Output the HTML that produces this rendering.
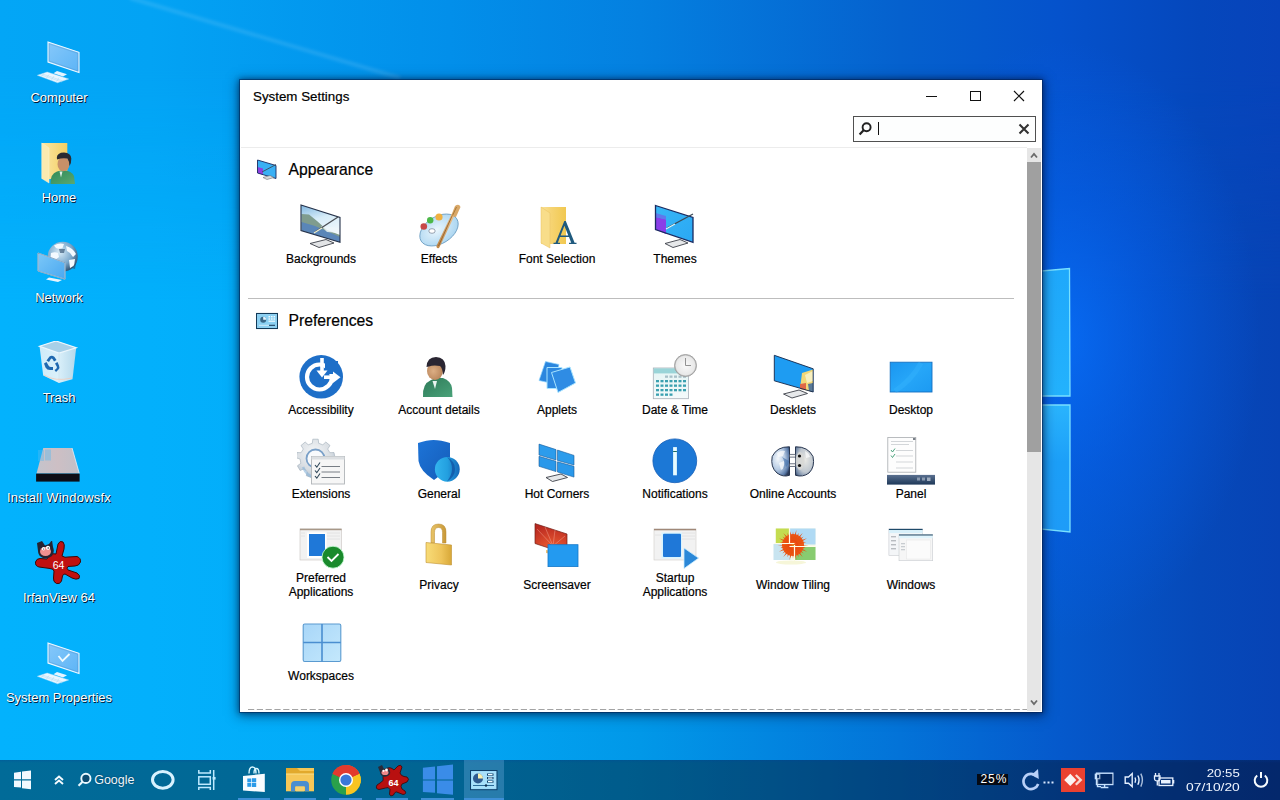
<!DOCTYPE html>
<html><head><meta charset="utf-8">
<style>
*{margin:0;padding:0;box-sizing:border-box}
html,body{width:1280px;height:800px;overflow:hidden}
body{position:relative;font-family:"Liberation Sans",sans-serif;background:#0480e0}
.full{position:absolute;left:0;top:0;width:1280px;height:800px}
#bgB{background:linear-gradient(90deg,#03b2fd 0px,#03b0fc 150px,#02aaf7 400px,#0198e8 640px,#0373d8 900px,#0559cc 1060px,#0649b9 1200px,#0743b5 1280px)}
#bgT{background:linear-gradient(90deg,#03a6f6 0px,#03a3f4 150px,#028fea 450px,#0480e0 640px,#0561ce 900px,#0552cc 1060px,#0547bc 1200px,#0743ba 1280px);
 -webkit-mask-image:linear-gradient(180deg,#000 0px,#000 70px,rgba(0,0,0,0) 300px)}
.dicon{position:absolute;left:0;width:118px;height:90px}
.dicon span{position:absolute;left:0;top:0;width:118px;text-align:center;color:#fff;font-size:13px;line-height:15px;white-space:nowrap;text-shadow:1px 1px 0.5px rgba(0,15,40,0.95),0 0 1.5px rgba(0,20,50,0.35)}
.dicon svg{position:absolute;left:35px;width:48px;height:48px}
#win{position:absolute;left:240px;top:80px;width:802px;height:632px;background:#fff;
 box-shadow:0 0 0 1px rgba(0,30,80,0.5),0 0 5px 1px rgba(0,20,60,0.45),0 2px 11px 2px rgba(0,15,50,0.5)}
.t{position:absolute;white-space:nowrap;color:#000;-webkit-text-stroke:0.2px #000}
.lbl{position:absolute;width:118px;text-align:center;font-size:12px;line-height:14px;color:#000;white-space:nowrap;-webkit-text-stroke:0.2px #000}
.ic{position:absolute;width:48px;height:48px}
#taskbar{position:absolute;left:0;top:760px;width:1280px;height:40px;background:rgba(0,0,0,0.4)}
.tb{position:absolute}
</style></head><body>
<div id="bgB" class="full"></div>
<div id="bgT" class="full"></div>
<svg class="full" width="1280" height="800">
 <defs>
  <radialGradient id="glow" cx="1060" cy="340" r="200" gradientTransform="translate(1060 340) scale(1 1.5) translate(-1060 -340)" gradientUnits="userSpaceOnUse">
   <stop offset="0" stop-color="#0870ff" stop-opacity="0.75"/>
   <stop offset="0.5" stop-color="#0660f0" stop-opacity="0.45"/>
   <stop offset="1" stop-color="#0660f0" stop-opacity="0"/>
  </radialGradient>
  <filter id="blur1"><feGaussianBlur stdDeviation="1.5"/></filter>
  <linearGradient id="pane1" x1="0" y1="0" x2="0" y2="1"><stop offset="0" stop-color="#1fa8fb"/><stop offset="1" stop-color="#23b2fd"/></linearGradient>
  <linearGradient id="pane2" x1="0" y1="0" x2="0" y2="1"><stop offset="0" stop-color="#2ab4fd"/><stop offset="0.45" stop-color="#1c9ff8"/><stop offset="1" stop-color="#1e9cf8"/></linearGradient>
 </defs>
 <rect x="800" y="0" width="480" height="760" fill="url(#glow)"/>
 <line x1="130" y1="-2" x2="400" y2="78" stroke="rgba(255,255,255,0.11)" stroke-width="4" filter="url(#blur1)"/>
 <polygon points="1030,272 1069.5,268.5 1070,396 1030,396" fill="url(#pane1)" stroke="#78e0ff" stroke-width="1.3"/>
 <polygon points="1030,405 1070,405 1070,532 1030,528" fill="url(#pane2)" stroke="#78e0ff" stroke-width="1.3"/>
</svg>
<svg class="dicon-svg" style="position:absolute;left:35px;top:38px" width="48" height="48" viewBox="0 0 48 48">
<defs><linearGradient id="cmp1" x1="0" y1="0" x2="1" y2="1"><stop offset="0" stop-color="#86c8fa"/><stop offset="1" stop-color="#5cb4f6"/></linearGradient></defs>
<polygon points="2.3,37.3 12.2,34 33.7,41 22.5,44.8" fill="#eaf6ff" stroke="#b8e0fa" stroke-width="0.4"/>
<g stroke="#a8d4f0" stroke-width="0.45"><path d="M7 35.8 L28 43"/><path d="M5 36.5 L27 44"/><path d="M9 35 L6.5 38.5"/><path d="M14 36.5 L11.5 40"/><path d="M19 38 L16.5 41.8"/><path d="M24 39.6 L21.5 43.5"/></g>
<polygon points="22,33 32,36.2 28,38.5 18.5,35.3" fill="#e4f4ff"/>
<polygon points="13,4 44,14.3 44,34.5 13,24" fill="url(#cmp1)"/>
<polygon points="13,4 44,14.3 44,34.5 13,24" fill="none" stroke="#eef8ff" stroke-width="1.1"/>
<polygon points="14.2,5.8 42.8,15.3 42.8,32.8 14.2,23" fill="none" stroke="#3a78b0" stroke-width="0.4" opacity="0.6"/>
</svg>
<div class="dicon" style="top:90.3px"><span style="left:0">Computer</span></div>
<svg class="dicon-svg" style="position:absolute;left:35px;top:141px" width="48" height="48" viewBox="0 0 48 48">
<defs><linearGradient id="hm1" x1="0" y1="0" x2="1" y2="0"><stop offset="0" stop-color="#fbe6a4"/><stop offset="1" stop-color="#f3cf62"/></linearGradient>
<linearGradient id="hm2" x1="0" y1="0" x2="1" y2="1"><stop offset="0" stop-color="#2e8a58"/><stop offset="1" stop-color="#5aa870"/></linearGradient></defs>
<rect x="6.8" y="2" width="25.5" height="36" fill="url(#hm1)"/>
<polygon points="6.8,2 14,7 14,42 6.8,37.5" fill="#fbeab0" stroke="#f8f0d0" stroke-width="0.5"/>
<path d="M15.5 43 Q15 33 22 30.5 L28 29 Q37 30 39 35 L40 43 Z" fill="url(#hm2)"/>
<path d="M24.5 30.5 L26 36.5 L27.5 30.5 Z" fill="#e0f0e8"/>
<ellipse cx="28.5" cy="23" rx="6" ry="7.3" fill="#c89068"/>
<path d="M21.8 17 Q22 11.5 29 11.5 Q36 12 36.3 17.5 Q36.5 22 34.5 25 Q34.2 20 32.5 17.5 Q27 16.5 22.3 18.5 Z" fill="#2a2a30"/>
</svg>
<div class="dicon" style="top:190.3px"><span style="left:0">Home</span></div>
<svg class="dicon-svg" style="position:absolute;left:35px;top:241px" width="48" height="48" viewBox="0 0 48 48">
<defs><radialGradient id="net1" cx="0.4" cy="0.35" r="0.7"><stop offset="0" stop-color="#d8ecf8"/><stop offset="0.6" stop-color="#7aa8cc"/><stop offset="1" stop-color="#2a4a6a"/></radialGradient>
<linearGradient id="net2" x1="0" y1="0" x2="1" y2="1"><stop offset="0" stop-color="#7cc8f8"/><stop offset="1" stop-color="#4aa8f0"/></linearGradient></defs>
<circle cx="27.7" cy="15.7" r="15" fill="url(#net1)"/>
<g fill="#f4faff"><path d="M19 4.5 Q24 1.5 29 3 L27.5 7 Q23 8.5 21 7 Z"/><path d="M31 5 Q38 7 41 13 L38 16 L35 12 L32 10 Z"/><path d="M16 12 Q20 10.5 23 12 L24 16 L20 19 L15.5 17 Z"/><path d="M34 19 L40 18 L39 25 L35 27 Z"/></g>
<g fill="#2a4868" opacity="0.6"><path d="M24 8 L30 8 L29 12 L25 12 Z"/><path d="M36 27 L41 22 L40 28 Z"/></g>
<path d="M14 36.5 L27 39 L23 41 L11 38.5 Z" fill="#e8f4fc"/>
<polygon points="3,12 30,21.7 30,38.2 3,30" fill="url(#net2)" stroke="#eaf6ff" stroke-width="1"/>
<polygon points="3,12 30,21.7 30,38.2 3,30" fill="none" stroke="#2a5a88" stroke-width="0.5"/>
</svg>
<div class="dicon" style="top:290.3px"><span style="left:0">Network</span></div>
<svg class="dicon-svg" style="position:absolute;left:35px;top:341px" width="48" height="48" viewBox="0 0 48 48">
<defs><linearGradient id="tr1" x1="0" y1="0" x2="1" y2="0"><stop offset="0" stop-color="#e0f0f8"/><stop offset="0.5" stop-color="#eef6fa"/><stop offset="1" stop-color="#c4dcea"/></linearGradient></defs>
<polygon points="4.5,5.2 21,0 41.2,6.7 37.5,38.2 24,42 8.2,34.5" fill="url(#tr1)" opacity="0.92"/>
<polygon points="4.5,5.2 21,0 41.2,6.7 24,12" fill="#a8d0e8" stroke="#ecf6fc" stroke-width="1.2"/>
<path d="M24 12 L24 42" stroke="#d0e4f0" stroke-width="0.8"/>
<g fill="#1f68b0">
<path d="M14.5 15.5 Q17 14 19.5 16 L21.5 19 L19 20.5 L17.5 18 Q16.5 17 15.5 18.5 L14 21 L11.5 19.5 Z"/>
<path d="M9 22.5 L11.5 21 L13.5 24.5 Q14.5 26 16 26 L18 26 L18 29 L15 29 Q12 29 10.5 26.5 Z"/>
<path d="M22.5 21 L20 22.5 L21.8 25.8 Q22.3 27 21 28 L19.5 29 L21 31 L23.5 28.5 Q25 26.5 24 24.5 Z"/>
</g>
<path d="M9 34 Q20 41 37 37" stroke="#f8c8b0" stroke-width="1" fill="none" opacity="0.7"/>
</svg>
<div class="dicon" style="top:390.3px"><span style="left:0">Trash</span></div>
<svg class="dicon-svg" style="position:absolute;left:35px;top:441px" width="48" height="48" viewBox="0 0 48 48">
<defs><linearGradient id="iw1" x1="0" y1="0" x2="1" y2="0"><stop offset="0" stop-color="#c4c4cc"/><stop offset="0.5" stop-color="#cdbfc4"/><stop offset="1" stop-color="#c0c0c8"/></linearGradient></defs>
<polygon points="8.25,7.1 37.1,7.1 44.25,32.4 1.5,32.4" fill="url(#iw1)"/>
<path d="M37.1 7.1 L44.25 32.4" stroke="#e8f0f8" stroke-width="0.8"/>
<rect x="1.1" y="32.6" width="43.5" height="8" fill="#0e0e16"/>
<path d="M3 9 L9 9 L9 20 L3 20 Z M10 8.5 L16 8.5 L16 19.5 L10 19.5 Z" fill="#58b8f0" opacity="0.4"/>
</svg>
<div class="dicon" style="top:490.3px"><span style="left:0;letter-spacing:0.22px">Install Windowsfx</span></div>
<svg class="dicon-svg" style="position:absolute;left:35px;top:541px" width="48" height="48" viewBox="0 0 48 48">
<path d="M14 14 Q18 12 21 13 L23 3 Q25 -1 28 1 Q30 3 29 8 L27 15 Q30 17 33 16 L42 15.5 Q46 17 45.5 21 Q44 25 40 25 L33 25.5 Q31 27 33 29 L42 32 Q46 34.5 44 37.5 Q41 39 37 37 L30 33 Q28 33 27.5 35 L26.5 40 Q25 43.5 21.5 42.5 Q18 41 18.5 37 L19 30 Q18 27.5 15 27.5 L4 26 Q0 25 0.5 21 Q1.5 17.5 5 17.5 L12 18 Z" fill="#c01010" stroke="#3a0808" stroke-width="1"/>
<path d="M2 2 L7 0 L10 4.5 L14 3 L17 -1 L18 6 Q20 11 17 15 Q13 18 8 17 Q3 15 3 10 Z" fill="#262230"/>
<ellipse cx="10.5" cy="10.5" rx="5.5" ry="4.5" fill="#f09090"/>
<circle cx="13" cy="6.8" r="2.1" fill="#ffffff"/><circle cx="8.5" cy="7.8" r="1.7" fill="#ffffff"/>
<circle cx="13.2" cy="7" r="0.7" fill="#222"/><circle cx="8.7" cy="8" r="0.6" fill="#222"/>
<text x="23.5" y="27.8" font-family="Liberation Sans" font-size="10.5" fill="#ffffff" text-anchor="middle">64</text>
</svg>
<div class="dicon" style="top:590.3px"><span style="left:0">IrfanView 64</span></div>
<svg class="dicon-svg" style="position:absolute;left:35px;top:639px" width="48" height="48" viewBox="0 0 48 48">
<defs><linearGradient id="cmp1" x1="0" y1="0" x2="1" y2="1"><stop offset="0" stop-color="#86c8fa"/><stop offset="1" stop-color="#5cb4f6"/></linearGradient></defs>
<polygon points="2.3,37.3 12.2,34 33.7,41 22.5,44.8" fill="#eaf6ff" stroke="#b8e0fa" stroke-width="0.4"/>
<g stroke="#a8d4f0" stroke-width="0.45"><path d="M7 35.8 L28 43"/><path d="M5 36.5 L27 44"/><path d="M9 35 L6.5 38.5"/><path d="M14 36.5 L11.5 40"/><path d="M19 38 L16.5 41.8"/><path d="M24 39.6 L21.5 43.5"/></g>
<polygon points="22,33 32,36.2 28,38.5 18.5,35.3" fill="#e4f4ff"/>
<polygon points="13,4 44,14.3 44,34.5 13,24" fill="url(#cmp1)"/>
<polygon points="13,4 44,14.3 44,34.5 13,24" fill="none" stroke="#eef8ff" stroke-width="1.1"/>
<polygon points="14.2,5.8 42.8,15.3 42.8,32.8 14.2,23" fill="none" stroke="#3a78b0" stroke-width="0.4" opacity="0.6"/>
<path d="M23.5 17 L27.5 22 L34.5 15" stroke="#f0fbff" stroke-width="1.8" fill="none"/></svg>
<div class="dicon" style="top:690.3px"><span style="left:0">System Properties</span></div>
<div id="win">
<div class="t" style="left:13px;top:8.5px;font-size:13.33px;line-height:16px">System Settings</div>
<div style="position:absolute;left:686px;top:15.5px;width:11px;height:1.3px;background:#111"></div>
<div style="position:absolute;left:730px;top:11px;width:11px;height:10px;border:1.3px solid #111"></div>
<svg style="position:absolute;left:773px;top:10px" width="12" height="12" viewBox="0 0 12 12"><path d="M1 1L11 11M11 1L1 11" stroke="#111" stroke-width="1.2"/></svg>
<div style="position:absolute;left:613px;top:36px;width:183px;height:26px;border:1px solid #505050;background:#fdfefe"></div>
<svg style="position:absolute;left:617px;top:40px" width="18" height="18" viewBox="0 0 18 18"><circle cx="9.6" cy="7.2" r="4" fill="none" stroke="#222" stroke-width="1.9"/><path d="M6.8 10L2.6 14.4" stroke="#222" stroke-width="2.2"/></svg>
<div style="position:absolute;left:638px;top:41.5px;width:1.2px;height:13.5px;background:#111"></div>
<svg style="position:absolute;left:778px;top:43px" width="12" height="12" viewBox="0 0 12 12"><path d="M1.5 1.5L10.5 10.5M10.5 1.5L1.5 10.5" stroke="#333" stroke-width="2.1"/></svg>
<div style="position:absolute;left:1px;top:66.5px;width:786px;height:1px;background:#ececec"></div>
<div style="position:absolute;left:787px;top:68px;width:14px;height:563px;background:#e6e6e6"></div>
<div style="position:absolute;left:787px;top:82px;width:14px;height:289.5px;background:#a0a0a0"></div>
<svg style="position:absolute;left:789px;top:71px" width="10" height="8" viewBox="0 0 10 8"><path d="M2 6.5L5 3L8 6.5" fill="none" stroke="#6a6a6a" stroke-width="1.8"/></svg>
<svg style="position:absolute;left:789px;top:619px" width="10" height="8" viewBox="0 0 10 8"><path d="M2 1.5L5 5L8 1.5" fill="none" stroke="#6a6a6a" stroke-width="1.8"/></svg>
<svg style="position:absolute;left:0;top:626px" width="787" height="6"><line x1="8" y1="3.5" x2="787" y2="3.5" stroke="#a4a4a4" stroke-width="1.2" stroke-dasharray="6.2 2.6"/></svg>
<svg style="position:absolute;left:16px;top:79px" width="22" height="22" viewBox="0 0 22 22">
<polygon points="1.5,1 20,6.5 20,19.5 1.5,14" fill="#3ab0f4"/>
<polygon points="1.5,8 7,9.5 7,15.8 1.5,14" fill="#9040e0"/>
<polygon points="1.5,1 20,6.5 20,19.5 1.5,14" fill="none" stroke="#1a2a60" stroke-width="0.9"/>
<path d="M6 13 L20 5.5" stroke="#3a4a58" stroke-width="0.9"/>
<path d="M7 18.5 L14 16.5 L18 18.5 L11 20.5 Z" fill="#d8dadc" stroke="#5a5a60" stroke-width="0.5"/>
</svg>
<div class="t" style="left:48.5px;top:81.2px;font-size:15.7px;line-height:18px">Appearance</div>
<div style="position:absolute;left:8px;top:218px;width:766px;height:1px;background:#bdbdbd"></div>
<svg style="position:absolute;left:16px;top:230px" width="22" height="22" viewBox="0 0 22 22">
<rect x="0.5" y="3.5" width="21" height="15" fill="#9ad8f6" stroke="#123a58" stroke-width="1.1"/>
<rect x="1.5" y="4.5" width="19" height="13" fill="#8ad0f2"/>
<circle cx="7.2" cy="9.8" r="3" fill="#3a6888"/>
<path d="M7.2 9.8 L7.2 6.8 A3 3 0 0 1 10.2 9.8 Z" fill="#e4f4fc"/>
<g fill="#eefaff"><rect x="12.5" y="6" width="1.6" height="1.4"/><rect x="15" y="6" width="1.6" height="1.4"/><rect x="17.5" y="6" width="1.6" height="1.4"/><rect x="12.5" y="8.3" width="1.6" height="1.4"/><rect x="15" y="8.3" width="1.6" height="1.4"/><rect x="17.5" y="8.3" width="1.6" height="1.4"/><rect x="12.5" y="10.6" width="6.6" height="1.2"/></g>
<rect x="3" y="14.8" width="10" height="1" fill="#d0ecf8"/><rect x="13" y="14.8" width="6" height="1" fill="#1a3a58"/>
</svg>
<div class="t" style="left:48.5px;top:232.2px;font-size:15.7px;line-height:18px">Preferences</div>
<svg class="ic" style="left:57px;top:122px" viewBox="0 0 48 48">
<defs><linearGradient id="bgk1" x1="0" y1="0" x2="0.3" y2="1"><stop offset="0" stop-color="#7fb6e0"/><stop offset="0.45" stop-color="#d6ecf8"/><stop offset="1" stop-color="#f4fafd"/></linearGradient></defs>
<path d="M13 41.5 L29 37.5 L37 41 L22 45.5 Z" fill="#e2e4e6" stroke="#3c4048" stroke-width="0.9"/>
<polygon points="4,3 43,15.5 43,40.3 4,28.6" fill="url(#bgk1)"/>
<polygon points="4.5,12 12,12.5 20,19 30,28 43,33 43,40 4.5,28.6" fill="#7f9c8e"/>
<polygon points="4.5,20 18,24 34,31 43,35 43,40.2 4.5,28.6" fill="#5a86b8"/>
<polygon points="24,24 43,26 43,31 30,30" fill="#eef6fa" opacity="0.8"/>
<polygon points="4,3 43,15.5 43,40.3 4,28.6" fill="none" stroke="#25324a" stroke-width="1.1"/>
<path d="M18 30 L41 15" stroke="#4a4f55" stroke-width="1.3"/>
<path d="M17 31 L25 26" stroke="#f0f0d0" stroke-width="1.3"/>
</svg>
<div class="lbl" style="left:22px;top:172.3px">Backgrounds</div>
<svg class="ic" style="left:175px;top:122px" viewBox="0 0 48 48">
<defs><radialGradient id="pal1" cx="0.45" cy="0.45" r="0.6"><stop offset="0" stop-color="#eaf6fd"/><stop offset="1" stop-color="#a8d4f0"/></radialGradient>
<linearGradient id="brs1" x1="0" y1="0" x2="1" y2="0"><stop offset="0" stop-color="#c08848"/><stop offset="1" stop-color="#e8c08c"/></linearGradient></defs>
<ellipse cx="24" cy="28" rx="21" ry="13.5" transform="rotate(-32 24 28)" fill="url(#pal1)" stroke="#6a9cc0" stroke-width="0.8"/>
<ellipse cx="17" cy="29" rx="3.2" ry="2.3" fill="#ffffff" stroke="#5a6a80" stroke-width="0.6"/>
<circle cx="8.8" cy="24.5" r="3.3" fill="#c84848"/>
<circle cx="15.2" cy="18.3" r="3.2" fill="#4cb848"/>
<circle cx="24" cy="15" r="3.6" fill="#f0b040"/>
<path d="M23 44.5 L38 13" stroke="url(#brs1)" stroke-width="3.2" stroke-linecap="round"/>
<path d="M23.5 44 L37 14" stroke="#8a5a28" stroke-width="0.8"/>
<path d="M36 14 L40 4 Q44 1 45.5 5 L41 15 Z" fill="#d9a868"/>
<path d="M37.5 13.5 L41.5 5" stroke="#a87838" stroke-width="1"/>
</svg>
<div class="lbl" style="left:140px;top:172.3px">Effects</div>
<svg class="ic" style="left:293px;top:122px" viewBox="0 0 48 48">
<defs><linearGradient id="fold1" x1="0" y1="0" x2="1" y2="0"><stop offset="0" stop-color="#f9e29a"/><stop offset="0.4" stop-color="#f6d473"/><stop offset="1" stop-color="#f1c850"/></linearGradient></defs>
<rect x="8" y="5" width="25" height="37" fill="url(#fold1)"/>
<polygon points="8,5 17,11 17,46 8,41" fill="#f8dd8a"/>
<polygon points="17,11 17,46 8,41 8,5" fill="none" stroke="#e8c060" stroke-width="0.5"/>
<path d="M31.3 19 L22.5 40.8 L20.5 40.8 L20.5 42 L27 42 L27 40.8 L24.8 40.8 L27 35 L36 35 L38.2 40.8 L36 40.8 L36 42 L43.5 42 L43.5 40.8 L41.6 40.8 L32.8 19 Z M27.6 33.5 L31.4 23.8 L35.3 33.5 Z" fill="#1f5a7e"/>
</svg>
<div class="lbl" style="left:258px;top:172.3px">Font Selection</div>
<svg class="ic" style="left:411px;top:122px" viewBox="0 0 48 48">
<defs><linearGradient id="thm1" x1="0" y1="0" x2="1" y2="1"><stop offset="0" stop-color="#38b6f6"/><stop offset="1" stop-color="#2aa8f4"/></linearGradient></defs>
<path d="M14 41.5 L29 37.5 L37 41 L22 45.5 Z" fill="#e6e8ea" stroke="#3c4048" stroke-width="0.9"/>
<polygon points="4.5,3.5 42,15.5 42,40.3 4.5,27.5" fill="url(#thm1)"/>
<polygon points="4.5,15 15,17.5 15,32 4.5,27.5" fill="#8a3ee8"/>
<polygon points="4.5,11 15,14 15,17.5 4.5,15" fill="#6a6ae8" opacity="0.8"/>
<polygon points="4.5,3.5 42,15.5 42,40.3 4.5,27.5" fill="none" stroke="#1a2a60" stroke-width="1.3"/>
<path d="M16 26 L42 12" stroke="#3a4a58" stroke-width="1.4"/>
<path d="M15 27 L24 22" stroke="#d8f8ff" stroke-width="1.3"/>
</svg>
<div class="lbl" style="left:376px;top:172.3px">Themes</div>
<svg class="ic" style="left:57px;top:273px" viewBox="0 0 48 48">
<circle cx="24.2" cy="23.8" r="21.8" fill="#1e6fc8"/>
<circle cx="22.5" cy="24" r="12.5" fill="none" stroke="#ffffff" stroke-width="4.2"/>
<circle cx="22.5" cy="24" r="8.5" fill="#1e6fc8"/>
<path d="M28 8 L41 8 L41 21 L28 21 Z" fill="#1e6fc8"/>
<path d="M25 5 L25 19" stroke="#fff" stroke-width="3.6"/>
<path d="M19.5 17.5 L25 24.5 L30.5 17.5 Z" fill="#fff"/>
<path d="M27 24.2 L38 24.2" stroke="#fff" stroke-width="3.6"/>
<path d="M36 18.5 L43.5 24.2 L36 30 Z" fill="#fff"/>
</svg>
<div class="lbl" style="left:22px;top:323.3px">Accessibility</div>
<svg class="ic" style="left:175px;top:273px" viewBox="0 0 48 48">
<defs><linearGradient id="acc1" x1="0" y1="0" x2="1" y2="1"><stop offset="0" stop-color="#2e7a58"/><stop offset="1" stop-color="#4aa27a"/></linearGradient>
<radialGradient id="acc2" cx="0.4" cy="0.5" r="0.6"><stop offset="0" stop-color="#dcae84"/><stop offset="1" stop-color="#b8845a"/></radialGradient></defs>
<path d="M8 44 Q7 31 16 27 L21 25 L28 25 Q36 28 37 35 L37.5 44 Z" fill="url(#acc1)"/>
<path d="M17.5 28 L20 36 L22 28 Z" fill="#e8f4f0"/>
<ellipse cx="20" cy="18" rx="8" ry="9" fill="url(#acc2)"/>
<path d="M11.5 14 Q12 4 21 4 Q30 4.5 30.5 13 Q30.5 19 28 22 Q27.5 15 25 13 Q18 12 14 13.5 Z" fill="#2a2632"/>
</svg>
<div class="lbl" style="left:140px;top:323.3px">Account details</div>
<svg class="ic" style="left:293px;top:273px" viewBox="0 0 48 48">
<polygon points="12.5,8.5 26,11.5 22,31 6,27.5" fill="#2b86de" stroke="#8fd6ff" stroke-width="0.7"/>
<polygon points="14,14.5 29,14.5 29,35.5 14,35.5" fill="#2d88e0" stroke="#a8e4ff" stroke-width="1"/>
<polygon points="18.5,19.5 37,14 42.5,30 25,39.5" fill="#2f8ce4" stroke="#a8e4ff" stroke-width="1"/>
</svg>
<div class="lbl" style="left:258px;top:323.3px">Applets</div>
<svg class="ic" style="left:411px;top:273px" viewBox="0 0 48 48">
<defs><linearGradient id="cal1" x1="0" y1="0" x2="0" y2="1"><stop offset="0" stop-color="#e4f4f4"/><stop offset="1" stop-color="#f4fafb"/></linearGradient>
<radialGradient id="clk1" cx="0.5" cy="0.5" r="0.5"><stop offset="0" stop-color="#fafafa"/><stop offset="0.85" stop-color="#e8e8e8"/><stop offset="1" stop-color="#a8a8a8"/></radialGradient></defs>
<rect x="2.3" y="15" width="35.2" height="30.7" fill="url(#cal1)" stroke="#a8b0b8" stroke-width="0.8"/>
<rect x="2.7" y="15.4" width="34.4" height="5" fill="#9ad4d8"/>
<g fill="#3aa0b0">
<rect x="5" y="27" width="3" height="2.3"/><rect x="9.5" y="27" width="3" height="2.3"/><rect x="14" y="27" width="3" height="2.3"/><rect x="18.5" y="27" width="3" height="2.3"/><rect x="23" y="27" width="3" height="2.3"/><rect x="27.5" y="27" width="3" height="2.3"/><rect x="32" y="27" width="3" height="2.3"/>
<rect x="5" y="31.5" width="3" height="2.3"/><rect x="9.5" y="31.5" width="3" height="2.3"/><rect x="14" y="31.5" width="3" height="2.3"/><rect x="18.5" y="31.5" width="3" height="2.3"/><rect x="23" y="31.5" width="3" height="2.3"/><rect x="27.5" y="31.5" width="3" height="2.3"/><rect x="32" y="31.5" width="3" height="2.3"/>
<rect x="5" y="36" width="3" height="2.3"/><rect x="9.5" y="36" width="3" height="2.3"/><rect x="14" y="36" width="3" height="2.3"/><rect x="18.5" y="36" width="3" height="2.3"/><rect x="23" y="36" width="3" height="2.3"/><rect x="27.5" y="36" width="3" height="2.3"/><rect x="32" y="36" width="3" height="2.3"/>
<rect x="5" y="40.5" width="3" height="2.3"/><rect x="9.5" y="40.5" width="3" height="2.3"/><rect x="14" y="40.5" width="3" height="2.3"/><rect x="18.5" y="40.5" width="3" height="2.3"/>
</g>
<g fill="#a8c0c8"><rect x="14" y="22.5" width="3" height="2.3"/><rect x="18.5" y="22.5" width="3" height="2.3"/><rect x="23" y="22.5" width="3" height="2.3"/><rect x="27.5" y="22.5" width="3" height="2.3"/><rect x="32" y="22.5" width="3" height="2.3"/></g>
<circle cx="34.5" cy="12.5" r="11" fill="url(#clk1)" stroke="#9a9a9a" stroke-width="0.8"/>
<path d="M34.5 5 L34.5 12.5 L40 12.5" stroke="#888" stroke-width="0.9" fill="none"/>
</svg>
<div class="lbl" style="left:376px;top:323.3px">Date &amp; Time</div>
<svg class="ic" style="left:529px;top:273px" viewBox="0 0 48 48">
<path d="M14.5 41 L30 37 L38.5 40.5 L23 45 Z" fill="#e6e8ea" stroke="#3c4048" stroke-width="0.9"/>
<polygon points="5.3,2.3 44.2,15.8 44.2,39 5.3,27.8" fill="#1e9cf2"/>
<polygon points="33,20 44,16.5 44,39 31,36" fill="#f3d878"/>
<polygon points="36,22 44,18 44,28 38,30" fill="#f8f0c0"/>
<polygon points="31,31 37,30 37,37 31,36" fill="#e06848"/>
<polygon points="39,31 44,30 44,39 40,38" fill="#5a7a98"/>
<polygon points="5.3,2.3 44.2,15.8 44.2,39 5.3,27.8" fill="none" stroke="#13264a" stroke-width="0.9"/>
</svg>
<div class="lbl" style="left:494px;top:323.3px">Desklets</div>
<svg class="ic" style="left:647px;top:273px" viewBox="0 0 48 48">
<defs><linearGradient id="dsk1" x1="0" y1="0" x2="1" y2="1"><stop offset="0" stop-color="#1a96f0"/><stop offset="0.5" stop-color="#26a6f8"/><stop offset="1" stop-color="#1c9af2"/></linearGradient></defs>
<rect x="3.2" y="9.2" width="41.8" height="29.8" fill="url(#dsk1)" stroke="#1670c0" stroke-width="0.9"/>
<path d="M8 38 Q24 28 34 10" stroke="#3ab8ff" stroke-width="5" opacity="0.35" fill="none"/>
</svg>
<div class="lbl" style="left:612px;top:323.3px">Desktop</div>
<svg class="ic" style="left:57px;top:357px" viewBox="0 0 48 48">
<defs><radialGradient id="gear1" cx="0.45" cy="0.35" r="0.75"><stop offset="0" stop-color="#f4f6f8"/><stop offset="0.6" stop-color="#d8dde2"/><stop offset="1" stop-color="#a4b8cc"/></radialGradient></defs>
<polygon points="15.8,2.2 21.2,2.2 21.7,6.3 25.8,7.8 28.8,5.0 33.0,8.5 30.7,12.0 32.9,15.7 37.0,15.5 38.0,20.8 34.0,22.0 33.2,26.3 36.6,28.8 33.9,33.5 30.0,31.9 26.7,34.6 27.7,38.7 22.6,40.6 20.7,36.8 16.3,36.8 14.4,40.6 9.3,38.7 10.3,34.6 7.0,31.9 3.1,33.5 0.4,28.8 3.8,26.3 3.0,22.0 -1.0,20.8 -0.0,15.5 4.1,15.7 6.3,12.0 4.0,8.5 8.2,5.0 11.2,7.8 15.3,6.3" fill="url(#gear1)" stroke="#a0acb8" stroke-width="0.6"/>
<circle cx="18.5" cy="21.5" r="9" fill="#f8fafc" stroke="#7aa0c8" stroke-width="1.8"/>
<path d="M6 30 Q10 40 18 40" stroke="#8ab4d8" stroke-width="2.5" fill="none" opacity="0.6"/>
<rect x="14.5" y="19.5" width="33" height="27.5" fill="#f6f6f6" stroke="#b0b4b8" stroke-width="0.9"/>
<rect x="14.5" y="19.5" width="33" height="3" fill="#dcdfe2"/>
<g stroke="#2e4658" stroke-width="1.1" fill="none"><path d="M18 28 L19.8 30.2 L23 25.5"/><path d="M18 33.5 L19.8 35.7 L23 31"/><path d="M18 39 L19.8 41.2 L23 36.5"/></g>
<g stroke="#6a7078" stroke-width="0.9"><path d="M24.5 29.5 L43 29.5"/><path d="M24.5 35 L43 35"/><path d="M24.5 40.5 L43 40.5"/></g>
</svg>
<div class="lbl" style="left:22px;top:407.3px">Extensions</div>
<svg class="ic" style="left:175px;top:357px" viewBox="0 0 48 48">
<defs><linearGradient id="gen1" x1="0" y1="0" x2="1" y2="1"><stop offset="0" stop-color="#1d74d8"/><stop offset="1" stop-color="#155cb8"/></linearGradient>
<linearGradient id="gen2" x1="0" y1="0" x2="1" y2="0"><stop offset="0" stop-color="#33b4ee"/><stop offset="0.5" stop-color="#23a0e0"/><stop offset="1" stop-color="#1466b8"/></linearGradient></defs>
<path d="M3 6 Q12 3 18.5 3 Q26 3 35 6 L35 24 Q34 33 19 43 Q5 34 3.5 24 Z" fill="url(#gen1)"/>
<circle cx="32.3" cy="32.3" r="12.4" fill="url(#gen2)"/>
<path d="M32 20 Q40 24 40 32 Q40 40 32 44.5 Q37 38 37 32 Q37 25 32 20 Z" fill="#0f4ea0" opacity="0.7"/>
</svg>
<div class="lbl" style="left:140px;top:407.3px">General</div>
<svg class="ic" style="left:293px;top:357px" viewBox="0 0 48 48">
<path d="M13 40.5 L28 37 L34.5 40.5 L19.5 44.5 Z" fill="#e6e8ea" stroke="#3c4048" stroke-width="0.9"/>
<polygon points="6,7.1 23,12.6 23,23 6,18" fill="#2c9cec"/>
<polygon points="24.5,13.1 41,18.4 41,28 24.5,23.5" fill="#2c9cec"/>
<polygon points="6,19.3 23,24.3 23,34.6 6,29.3" fill="#2a98ea"/>
<polygon points="24.5,24.8 41,29.3 41,40.1 24.5,35" fill="#2a98ea"/>
<g fill="none" stroke="#1a5a98" stroke-width="0.6"><polygon points="6,7.1 23,12.6 23,23 6,18"/><polygon points="24.5,13.1 41,18.4 41,28 24.5,23.5"/><polygon points="6,19.3 23,24.3 23,34.6 6,29.3"/><polygon points="24.5,24.8 41,29.3 41,40.1 24.5,35"/></g>
</svg>
<div class="lbl" style="left:258px;top:407.3px">Hot Corners</div>
<svg class="ic" style="left:411px;top:357px" viewBox="0 0 48 48">
<circle cx="23.8" cy="23.8" r="21.9" fill="#1c78d6" stroke="#1660b8" stroke-width="0.8"/>
<rect x="22.1" y="10.1" width="3.8" height="28.2" fill="#e6fbff"/>
<rect x="22.1" y="14" width="3.8" height="1" fill="#1b6a60"/>
</svg>
<div class="lbl" style="left:376px;top:407.3px">Notifications</div>
<svg class="ic" style="left:529px;top:357px" viewBox="0 0 48 48">
<defs><radialGradient id="onl1" cx="0.35" cy="0.4" r="0.75"><stop offset="0" stop-color="#f4f8fc"/><stop offset="0.5" stop-color="#b8cce4"/><stop offset="0.85" stop-color="#5a7aa8"/><stop offset="1" stop-color="#2a3a58"/></radialGradient>
<radialGradient id="onl2" cx="0.55" cy="0.45" r="0.75"><stop offset="0" stop-color="#e8e8e4"/><stop offset="0.55" stop-color="#c0c8d0"/><stop offset="0.85" stop-color="#6a80a0"/><stop offset="1" stop-color="#2a3a58"/></radialGradient></defs>
<path d="M20.5 9.8 Q8 9.5 3.2 19.5 Q1.2 30 8 36 Q14 40.5 20.5 38.3 Z" fill="url(#onl1)" stroke="#283650" stroke-width="1"/>
<path d="M26.5 9.8 Q39 9.5 44 19.5 Q46.2 30 40 36 Q34 40.5 26.5 38.3 Z" fill="url(#onl2)" stroke="#283650" stroke-width="1"/>
<g fill="#ffffff" opacity="0.7"><path d="M8 16 Q12 13 16 14 L14 19 L9 20 Z"/><path d="M10 26 L15 24 L17 30 L12 33 Z"/><path d="M36 14 Q40 16 41 20 L37 21 Z"/></g>
<path d="M13 20 Q17 24 14 32 Q19 30 20 24 Z" fill="#3a6aa8" opacity="0.6"/>
<rect x="20.5" y="17.3" width="6" height="2.8" fill="#f4f4f4" stroke="#3a4458" stroke-width="0.7"/>
<rect x="20.5" y="26.8" width="6" height="2.8" fill="#f4f4f4" stroke="#3a4458" stroke-width="0.7"/>
<ellipse cx="31" cy="24" rx="4.5" ry="9" fill="#d8d8d4" opacity="0.8"/>
<circle cx="30.5" cy="19" r="1.6" fill="#111"/><circle cx="30.5" cy="28.5" r="1.6" fill="#111"/>
</svg>
<div class="lbl" style="left:494px;top:407.3px">Online Accounts</div>
<svg class="ic" style="left:647px;top:357px" viewBox="0 0 48 48">
<defs><linearGradient id="pan1" x1="0" y1="0" x2="0" y2="1"><stop offset="0" stop-color="#5a7090"/><stop offset="1" stop-color="#1e3858"/></linearGradient></defs>
<rect x="0.8" y="0.4" width="28" height="34.8" fill="#fdfdfd" stroke="#a8acb0" stroke-width="0.8"/>
<rect x="26" y="1" width="2.5" height="2" fill="#7a8088"/>
<g stroke="#c0c4c8" stroke-width="0.7"><path d="M4 4.5 L26 4.5"/><path d="M4 7.5 L22 7.5"/><path d="M9 13.5 L26 13.5"/><path d="M9 19 L26 19"/><path d="M9 25 L26 25"/><path d="M9 31 L26 31"/></g>
<path d="M4 13 L5.5 15 L8 11.5 M4 18.5 L5.5 20.5 L8 17" stroke="#3a9a70" stroke-width="0.9" fill="none"/>
<rect x="0" y="37.9" width="48" height="9.7" fill="url(#pan1)"/>
<rect x="30" y="40.5" width="3" height="3" fill="#8a9ab0"/><rect x="35" y="40.5" width="3" height="3" fill="#8a9ab0"/><rect x="40" y="40.5" width="3.5" height="3.5" fill="#a0aec0"/>
</svg>
<div class="lbl" style="left:612px;top:407.3px">Panel</div>
<svg class="ic" style="left:57px;top:441px" viewBox="0 0 48 48">
<rect x="3" y="7.8" width="41.6" height="31.2" fill="#f2f2f2" stroke="#c8c4c0" stroke-width="0.6"/>
<rect x="3" y="7.8" width="41.6" height="1.4" fill="#a89888"/>
<g stroke="#e0e0e0" stroke-width="0.8"><path d="M30 12 L43 12"/><path d="M30 15 L43 15"/><path d="M30 18 L43 18"/><path d="M4 12 L8 12"/><path d="M4 15 L8 15"/></g>
<rect x="10" y="11.5" width="19.5" height="25.5" fill="#ffffff"/>
<rect x="12" y="13" width="16" height="22" fill="#1f78d8"/>
<circle cx="36" cy="36.2" r="11" fill="#1a8a2c" stroke="#c8ffd8" stroke-width="0.8"/>
<path d="M30.5 36 L34.5 40 L41.5 33" stroke="#fff" stroke-width="1.8" fill="none"/>
</svg>
<div class="lbl" style="left:22px;top:491.3px">Preferred<br>Applications</div>
<svg class="ic" style="left:175px;top:441px" viewBox="0 0 48 48">
<defs><linearGradient id="lck1" x1="0" y1="0" x2="1" y2="0"><stop offset="0" stop-color="#f8dc78"/><stop offset="0.6" stop-color="#eec45a"/><stop offset="1" stop-color="#d8a838"/></linearGradient>
<linearGradient id="lck2" x1="0" y1="0" x2="1" y2="0"><stop offset="0" stop-color="#e8c468"/><stop offset="1" stop-color="#c89838"/></linearGradient></defs>
<path d="M16 22 L16 11 Q16 3 23.5 3 Q31 3 31 11 L31 22 L27.5 22 L27.5 11.5 Q27.5 6.5 23.5 6.5 Q19.5 6.5 19.5 11.5 L19.5 22 Z" fill="url(#lck2)" stroke="#b88a30" stroke-width="0.5"/>
<path d="M11 21.5 L36.5 24 L36.5 44 L11 41.5 Z" fill="url(#lck1)" stroke="#c09030" stroke-width="0.6"/>
</svg>
<div class="lbl" style="left:140px;top:498.3px">Privacy</div>
<svg class="ic" style="left:293px;top:441px" viewBox="0 0 48 48">
<defs><radialGradient id="scr1" cx="0.55" cy="1" r="1"><stop offset="0" stop-color="#f8c030"/><stop offset="0.25" stop-color="#e85830"/><stop offset="1" stop-color="#b82820"/></radialGradient></defs>
<polygon points="2,2.6 34,13 34,33 2,22.5" fill="url(#scr1)" stroke="#702018" stroke-width="0.7"/>
<g stroke="#f8b0a0" stroke-width="0.6" opacity="0.7"><path d="M20 25 L4 8"/><path d="M20 25 L12 6"/><path d="M20 25 L22 9"/><path d="M20 25 L32 15"/></g>
<path d="M13 29 L20 30 L20 33 L13 32 Z" fill="#f0c070"/>
<rect x="15" y="23.7" width="30" height="21.9" fill="#239af0" stroke="#1678c8" stroke-width="0.8"/>
</svg>
<div class="lbl" style="left:258px;top:498.3px">Screensaver</div>
<svg class="ic" style="left:411px;top:441px" viewBox="0 0 48 48">
<rect x="3" y="7.9" width="42" height="31.1" fill="#f2f2f2" stroke="#d0ccc8" stroke-width="0.6"/>
<rect x="3" y="7.9" width="42" height="1.4" fill="#a08878"/>
<g stroke="#e0e0e0" stroke-width="0.8"><path d="M31 12 L44 12"/><path d="M31 15 L44 15"/><path d="M31 18 L44 18"/><path d="M4 14 L10 14"/></g>
<rect x="10.5" y="11.5" width="20.5" height="26" fill="#d8f4ff"/>
<rect x="12" y="12.8" width="18" height="23.2" rx="1" fill="#1f78d8"/>
<polygon points="33,27 47.6,37.1 33,47.6" fill="#2b88d8" stroke="#c8ecff" stroke-width="0.8"/>
</svg>
<div class="lbl" style="left:376px;top:491.3px">Startup<br>Applications</div>
<svg class="ic" style="left:529px;top:441px" viewBox="0 0 48 48">
<defs><radialGradient id="wtf" cx="0.5" cy="0.5" r="0.5"><stop offset="0" stop-color="#c8a020"/><stop offset="0.3" stop-color="#f06018"/><stop offset="1" stop-color="#e84010"/></radialGradient></defs>
<rect x="6.8" y="7.5" width="39.7" height="31.5" fill="#f4f8e8"/>
<rect x="6.8" y="7.5" width="14" height="15" fill="#c4dc50"/>
<rect x="21" y="7.5" width="25.5" height="16" fill="#b0daf4"/>
<rect x="4.5" y="23" width="17" height="16" fill="#c8e4f0"/>
<rect x="26" y="25.5" width="20.5" height="13.5" fill="#88cc70"/>
<circle cx="24" cy="24" r="11" fill="#ee5a18"/>
<path d="M28.8 22.8L39.5 24.0L28.8 25.2ZM29.0 23.9L37.2 27.0L28.5 26.3ZM28.9 25.0L38.0 30.7L27.8 27.2ZM28.6 26.1L34.6 32.4L27.0 28.0ZM28.0 27.0L33.7 36.1L26.1 28.6ZM27.2 27.8L29.9 36.2L25.0 28.9ZM26.3 28.5L27.4 39.1L23.9 29.0ZM25.2 28.8L24.0 37.5L22.8 28.8ZM24.1 29.0L20.6 39.1L21.7 28.5ZM23.0 28.9L18.1 36.2L20.8 27.8ZM21.9 28.6L14.3 36.1L20.0 27.0ZM21.0 28.0L13.4 32.4L19.4 26.1ZM20.2 27.2L10.0 30.7L19.1 25.0ZM19.5 26.3L10.8 27.0L19.0 23.9ZM19.2 25.2L8.5 24.0L19.2 22.8ZM19.0 24.1L10.8 21.0L19.5 21.7ZM19.1 23.0L10.0 17.3L20.2 20.8ZM19.4 21.9L13.4 15.6L21.0 20.0ZM20.0 21.0L14.3 11.9L21.9 19.4ZM20.8 20.2L18.1 11.8L23.0 19.1ZM21.7 19.5L20.6 8.9L24.1 19.0ZM22.8 19.2L24.0 10.5L25.2 19.2ZM23.9 19.0L27.4 8.9L26.3 19.5ZM25.0 19.1L29.9 11.8L27.2 20.2ZM26.1 19.4L33.7 11.9L28.0 21.0ZM27.0 20.0L34.6 15.6L28.6 21.9ZM27.8 20.8L38.0 17.3L28.9 23.0ZM28.5 21.7L37.2 21.0L29.0 24.1Z" fill="#e85010"/>
<circle cx="24" cy="24" r="5" fill="url(#wtf)"/>
<path d="M20.5 7 L20.5 23 M25.5 24 L25.5 40 M5 22.5 L25.5 22.5 M20.5 25.5 L47 25.5" stroke="#fffce8" stroke-width="1.2"/>
<ellipse cx="22" cy="41.5" rx="15" ry="2" fill="#f0f0c0" opacity="0.6"/>
</svg>
<div class="lbl" style="left:494px;top:498.3px">Window Tiling</div>
<svg class="ic" style="left:647px;top:441px" viewBox="0 0 48 48">
<rect x="1.9" y="7.9" width="33.7" height="26.6" fill="#f4f6f8" stroke="#c8ccd0" stroke-width="0.6"/>
<rect x="1.9" y="7.9" width="33.7" height="1.2" fill="#1e4a6a"/>
<rect x="1.9" y="9.1" width="33.7" height="3" fill="#d8f0fa"/>
<g fill="#b8bcc0"><rect x="4" y="15" width="5" height="1.4"/><rect x="4" y="19" width="5" height="1.4"/><rect x="4" y="23" width="5" height="1.4"/><rect x="4" y="27" width="5" height="1.4"/></g>
<rect x="12" y="13.5" width="33.7" height="26.2" fill="#f6f6f6" stroke="#c8ccd0" stroke-width="0.6"/>
<rect x="12" y="13.5" width="33.7" height="1.2" fill="#1e4a6a"/>
<rect x="12" y="14.7" width="33.7" height="2.5" fill="#e0f4fc"/>
<g fill="#c8ccd0"><rect x="14" y="22" width="4" height="1.3"/><rect x="14" y="25" width="4" height="1.3"/><rect x="14" y="28" width="4" height="1.3"/></g>
<rect x="19.5" y="19" width="24" height="19" fill="#fbfbfb" stroke="#e4e4e4" stroke-width="0.5"/>
</svg>
<div class="lbl" style="left:612px;top:498.3px">Windows</div>
<svg class="ic" style="left:57px;top:539px" viewBox="0 0 48 48">
<defs><linearGradient id="wsp1" x1="0" y1="0" x2="1" y2="1"><stop offset="0" stop-color="#a8d6f8"/><stop offset="1" stop-color="#c4e8fc"/></linearGradient></defs>
<rect x="6.2" y="5" width="37.6" height="37.5" rx="1.5" fill="url(#wsp1)" stroke="#5a9ad0" stroke-width="1.1"/>
<path d="M25 5 L25 42.5 M6.2 23.5 L43.8 23.5" stroke="#4a8ed0" stroke-width="1.6"/>
</svg>
<div class="lbl" style="left:22px;top:589.3px">Workspaces</div>
</div>
<div id="taskbar"></div>
<div style="position:absolute;left:0;top:760px;width:1280px;height:3px;background:linear-gradient(180deg,rgba(0,60,160,0.22),rgba(0,60,160,0))"></div>
<div style="position:absolute;left:464px;top:760px;width:40px;height:40px;background:rgba(120,180,230,0.32)"></div>
<div style="position:absolute;left:238px;top:798px;width:32px;height:2px;background:#3d8fd6"></div>
<div style="position:absolute;left:284px;top:798px;width:32px;height:2px;background:#3d8fd6"></div>
<div style="position:absolute;left:329px;top:798px;width:33px;height:2px;background:#3d8fd6"></div>
<div style="position:absolute;left:376px;top:798px;width:32px;height:2px;background:#3d8fd6"></div>
<div style="position:absolute;left:421px;top:798px;width:33px;height:2px;background:#3d8fd6"></div>
<div style="position:absolute;left:464px;top:798px;width:40px;height:2px;background:#3d8fd6"></div>
<svg style="position:absolute;left:10px;top:766px;overflow:visible" width="26" height="28" viewBox="0 0 26 28"><polygon points="4,6.7 11,5.8 11,13.3 4,13.3" fill="#f2f9ff"/><polygon points="12,5.6 21,4.5 21,13.3 12,13.3" fill="#f2f9ff"/>
<polygon points="4,14.4 11,14.4 11,21.6 4,21.1" fill="#f2f9ff"/><polygon points="12,14.4 21,14.4 21,23.3 12,22.3" fill="#f2f9ff"/></svg>
<svg style="position:absolute;left:50px;top:772px;overflow:visible" width="18" height="16" viewBox="0 0 18 16"><path d="M5 8L9 4.5L13 8M5 12L9 8.5L13 12" fill="none" stroke="#f4fbff" stroke-width="1.9"/></svg>
<svg style="position:absolute;left:74px;top:770px;overflow:visible" width="20" height="20" viewBox="0 0 20 20"><circle cx="11.9" cy="8.4" r="4.6" fill="rgba(20,50,80,0.55)" stroke="#e8f8ff" stroke-width="1.9"/><path d="M8.6 11.8L4.5 15.8" stroke="#e8f8ff" stroke-width="2.1"/></svg>
<div style="position:absolute;left:94.2px;top:773px;font-size:12.5px;line-height:14px;color:#eef9ff;white-space:nowrap;text-shadow:0 0 1.5px rgba(0,30,60,0.9)">Google</div>
<svg style="position:absolute;left:148px;top:767px;overflow:visible" width="30" height="26" viewBox="0 0 30 26"><ellipse cx="14.8" cy="12.8" rx="10.3" ry="8.4" fill="none" stroke="#d8f2ff" stroke-width="3"/></svg>
<svg style="position:absolute;left:195px;top:767px;overflow:visible" width="26" height="26" viewBox="0 0 26 26"><g fill="none" stroke="#bfeaff" stroke-width="1.5"><rect x="3.8" y="9.8" width="11.5" height="7.5"/><path d="M3.8 3 L3.8 6 L15.3 6 L15.3 3"/><path d="M3.8 23 L3.8 20.5 L15.3 20.5 L15.3 23"/><path d="M18.7 3 L18.7 23"/></g><rect x="17.6" y="10" width="3" height="2.6" fill="#bfeaff"/></svg>
<svg style="position:absolute;left:240px;top:765px;overflow:visible" width="28" height="30" viewBox="0 0 28 30"><path d="M9 8.5 Q9 2 12.5 2 Q16 2 16 8.5 M14 8.5 Q14 3.5 16.5 3.5 Q19 3.5 19 8.5" fill="none" stroke="#d8f6ff" stroke-width="1.4"/>
<polygon points="3,11 24.8,8.7 24.8,27 3,25.5" fill="#f8fcff"/>
<g fill="#2a9ae8"><rect x="7.3" y="13.5" width="4" height="3.8"/><rect x="12" y="13.2" width="4.2" height="4.1"/><rect x="7.3" y="18" width="4" height="3.8"/><rect x="12" y="18" width="4.2" height="4"/></g></svg>
<svg style="position:absolute;left:284px;top:766px;overflow:visible" width="32" height="28" viewBox="0 0 32 28"><rect x="2" y="2" width="28" height="23.3" fill="#f6c758"/>
<path d="M2 2 L13 2 L16 5 L30 5 L30 8 L2 8 Z" fill="#e2a92c"/>
<path d="M2 8 L30 8" stroke="#fbe08a" stroke-width="1"/>
<path d="M7 25.3 L7 19 Q7 15 11 15 L21 15 Q25 15 25 19 L25 25.3 L21 25.3 L21 20.5 L11 20.5 L11 25.3 Z" fill="#4a8ed0"/>
<rect x="12" y="20.5" width="8" height="4.8" fill="#f3d070"/></svg>
<svg style="position:absolute;left:330px;top:764px;overflow:visible" width="32" height="32" viewBox="0 0 32 32"><defs><clipPath id="chc"><circle cx="16" cy="16" r="14.8"/></clipPath></defs>
<g clip-path="url(#chc)">
<rect x="0" y="0" width="32" height="32" fill="#2aa04a"/>
<path d="M16 16 L16 -2 L34 -2 L34 20 Z" fill="#f8c422"/>
<path d="M16 16 L-2 8 L-2 -2 L34 -2 L34 8 Z" fill="#e23a2e"/>
<path d="M16 16 L34 8 L34 24 L16 34 Z" fill="#f8c422"/>
</g>
<path d="M16 16 L2.6 9.5 A14.8 14.8 0 0 1 29.4 9.5 Z" fill="#e23a2e"/>
<circle cx="16" cy="16" r="7" fill="#ffffff"/><circle cx="16" cy="16" r="5.6" fill="#3a78d8"/></svg>
<svg style="position:absolute;left:374px;top:763px;overflow:visible" width="36" height="34" viewBox="0 0 36 34"><path d="M12 6 Q16 3 20 7 L24 3 Q27 1 28 4 L26 10 Q27 13 30 13.5 L33 14 Q36 16 33 19 L28 21 Q26 23 28 26 L31 28 Q33 31 29 31.5 L24 29.5 Q22 28 20.5 30 L19.5 32 Q16 34 15.5 31 L16 26.5 Q14.5 23.5 11.5 25 L5 26.5 Q1 26 3 22 L7.5 19 Q10 17.5 9 14.5 Q8.5 10 12 6 Z" fill="#b81010" stroke="#3a0606" stroke-width="0.8"/>
<path d="M4 4 L8 2 L10 6 L13 4.5 Q17 7 16 11 Q13.5 14.5 9.5 13.5 Q6 12 6 9 Z" fill="#2a2a38"/>
<ellipse cx="11" cy="9.5" rx="3.5" ry="2.6" fill="#f08888"/><circle cx="12.5" cy="7" r="1.4" fill="#fff"/><circle cx="9.5" cy="7.8" r="1.1" fill="#fff"/>
<text x="19.5" y="23" font-family="Liberation Sans" font-size="9" font-weight="bold" fill="#ffffff" text-anchor="middle">64</text></svg>
<svg style="position:absolute;left:420px;top:763px;overflow:visible" width="36" height="34" viewBox="0 0 36 34"><polygon points="2.9,4.8 15,3.5 15,16.5 2.9,16.5" fill="#3a8ce8"/><polygon points="17,3.2 33,1.5 33,16.5 17,16.5" fill="#3a8ce8"/>
<polygon points="2.9,17.5 15,17.5 15,29.7 2.9,29" fill="#3a8ce8"/><polygon points="17,17.5 33,17.5 33,31.8 17,30.2" fill="#3a8ce8"/></svg>
<svg style="position:absolute;left:468px;top:768px;overflow:visible" width="32" height="24" viewBox="0 0 32 24"><rect x="2.5" y="2.5" width="26.5" height="19.2" fill="#8ed4f8" stroke="#0e3e68" stroke-width="1"/>
<rect x="3.5" y="3.5" width="24.5" height="17.2" fill="#a8e0fa"/>
<circle cx="10" cy="10.5" r="5" fill="#2e5a90"/><path d="M10 10.5 L10 5.5 A5 5 0 0 1 15 10.5 Z" fill="#f8f0b0"/>
<g fill="#0e3e68"><rect x="19" y="5.5" width="6.5" height="2.2"/><rect x="19" y="9" width="6.5" height="2.2"/><rect x="19" y="12.5" width="6.5" height="2.2"/></g>
<g fill="#f0fbff"><rect x="20" y="6" width="4.5" height="1.2"/><rect x="20" y="9.5" width="4.5" height="1.2"/><rect x="20" y="13" width="4.5" height="1.2"/></g>
<path d="M5 17.5 L26 17.5" stroke="#2a6a98" stroke-width="1"/><circle cx="18" cy="17.5" r="1.2" fill="#0e2e50"/></svg>
<div style="position:absolute;left:977px;top:773.6px;width:31px;height:11px;background:#050a14"></div>
<div style="position:absolute;left:980.5px;top:772px;font-size:12px;line-height:14px;color:#fff;white-space:nowrap;letter-spacing:0.9px">25%</div>
<svg style="position:absolute;left:1020px;top:766px;overflow:visible" width="24" height="28" viewBox="0 0 24 28"><path d="M16.8 10.5 A7.6 7.6 0 1 0 18.2 18" fill="none" stroke="#b8d0f8" stroke-width="2.6"/>
<polygon points="11.5,9 18,3 18.8,13" fill="#b8d0f8"/></svg>
<svg style="position:absolute;left:1042px;top:780px;overflow:visible" width="14" height="5" viewBox="0 0 14 5"><g fill="#d8e8ff"><rect x="1.5" y="1.5" width="2" height="2"/><rect x="5.5" y="1.5" width="2" height="2"/><rect x="9.5" y="1.5" width="2" height="2"/></g></svg>
<div style="position:absolute;left:1061px;top:768px;width:24px;height:24px;background:#ea4130"></div>
<svg style="position:absolute;left:1061px;top:768px;overflow:visible" width="24" height="24" viewBox="0 0 24 24"><polygon points="9.3,5.8 15.3,11.9 9.3,18 3.2,11.9" fill="#fbf4f2"/><path d="M14.8 7 L19.8 11.9 L14.8 16.8" fill="none" stroke="#f8d8d0" stroke-width="2.3"/></svg>
<svg style="position:absolute;left:1092px;top:770px;overflow:visible" width="24" height="22" viewBox="0 0 24 22"><g fill="none" stroke="#c8e2ff" stroke-width="1.4"><rect x="4.5" y="3.2" width="16.3" height="11.3"/><path d="M12.6 14.5 L12.6 17.5 M8.7 17.5 L16.4 17.5"/><rect x="3.4" y="4.3" width="4.3" height="4.3"/><path d="M5.5 8.6 L5.5 16.6 L9 16.6"/></g><rect x="5" y="4" width="16" height="10" fill="rgba(0,10,40,0.25)"/></svg>
<svg style="position:absolute;left:1122px;top:770px;overflow:visible" width="24" height="20" viewBox="0 0 24 20"><g fill="none" stroke="#e4f0ff" stroke-width="1.4"><path d="M3.2 7 L6.5 7 L10.2 3.6 L10.2 16.6 L6.5 13.2 L3.2 13.2 Z"/><path d="M13 7.5 Q14.3 10 13 12.8"/><path d="M15.8 5.5 Q18.3 10 15.8 14.8"/><path d="M18.8 3.6 Q22 10 18.8 16.6" opacity="0.75"/></g></svg>
<svg style="position:absolute;left:1152px;top:770px;overflow:visible" width="24" height="20" viewBox="0 0 24 20"><g fill="none" stroke="#e8f2ff" stroke-width="1.3"><rect x="7" y="8" width="13.8" height="7.5"/><path d="M3.5 3 L3.5 6 M7 3 L7 6 M2.5 6 L8 6 L8 8.5 Q8 11 5.3 11 Q2.5 11 2.5 8.5 Z M5.3 11 L5.3 15.5"/></g><rect x="20.8" y="10" width="1.5" height="3.5" fill="#e8f2ff"/><rect x="9" y="10" width="9.5" height="3.5" fill="#e8f2ff"/></svg>
<div style="position:absolute;left:1150px;top:766.5px;width:90px;text-align:right;font-size:11.5px;line-height:13px;color:#f0f6ff;white-space:nowrap"><span style="display:inline-block;transform:scaleX(1.15);transform-origin:right center">20:55</span></div>
<div style="position:absolute;left:1150px;top:781.3px;width:90px;text-align:right;font-size:11.5px;line-height:13px;color:#f0f6ff;white-space:nowrap"><span style="display:inline-block;transform:scaleX(1.2);transform-origin:right center">07/10/20</span></div>
<svg style="position:absolute;left:1251px;top:769px;overflow:visible" width="20" height="22" viewBox="0 0 20 22"><path d="M6.2 6.5 A6.3 6.3 0 1 0 13.8 6.5" fill="none" stroke="#f6fbff" stroke-width="2"/><path d="M10 3 L10 9" stroke="#f6fbff" stroke-width="2"/></svg>
</body></html>
